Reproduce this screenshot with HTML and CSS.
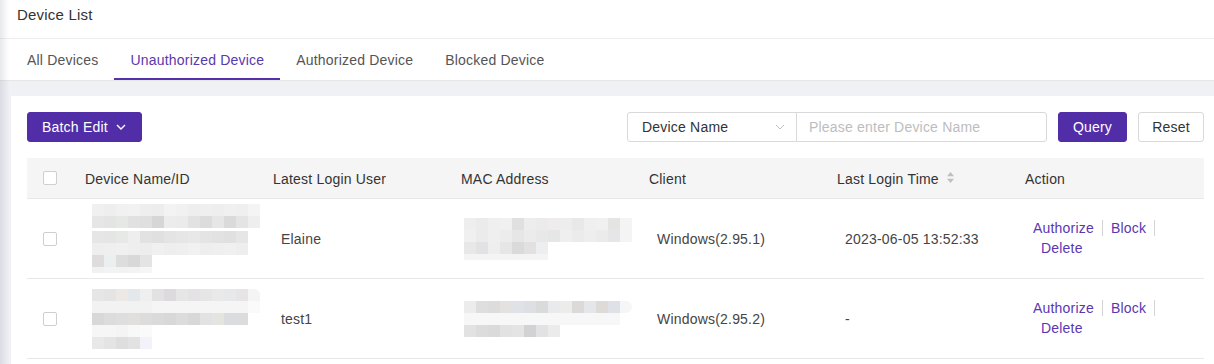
FILE: index.html
```html
<!DOCTYPE html>
<html lang="en">
<head>
<meta charset="utf-8">
<title>Device List</title>
<link rel="stylesheet" href="styles.css">
</head>
<body>
<div class="page">
  <div class="page-header">Device List</div>
  <div class="tabs">
    <div class="tab">All Devices</div>
    <div class="tab active">Unauthorized Device</div>
    <div class="tab">Authorized Device</div>
    <div class="tab">Blocked Device</div>
  </div>
  <div class="content">
    <div class="card">
      <div class="toolbar">
        <button class="btn btn-primary batch">Batch Edit
          <svg class="chev" width="10" height="6" viewBox="0 0 10 6"><path d="M1 1 L5 5 L9 1" fill="none" stroke="#fff" stroke-width="1.4"/></svg>
        </button>
        <div class="search">
          <div class="select">Device Name
            <svg class="chev" width="10" height="6" viewBox="0 0 10 6"><path d="M1 1 L5 5 L9 1" fill="none" stroke="#bfbfbf" stroke-width="1"/></svg>
          </div>
          <input class="input" type="text" placeholder="Please enter Device Name">
          <button class="btn btn-primary query">Query</button>
          <button class="btn btn-default reset">Reset</button>
        </div>
      </div>

      <div class="table">
        <div class="row head">
          <div class="cell check"><span class="checkbox"></span></div>
          <div class="cell">Device Name/ID</div>
          <div class="cell">Latest Login User</div>
          <div class="cell">MAC Address</div>
          <div class="cell">Client</div>
          <div class="cell">Last Login Time
            <svg class="sort" width="7" height="11" viewBox="0 0 7 11"><path d="M3.5 0 L7 4.2 L0 4.2 Z M0 6.8 L7 6.8 L3.5 11 Z" fill="#bfbfbf"/></svg>
          </div>
          <div class="cell">Action</div>
        </div>

        <div class="row">
          <div class="cell check"><span class="checkbox"></span></div>
          <div class="cell"><div class="mosaic dev">
            <div class="strip d1a"></div><div class="strip d1b"></div><div class="strip gap"></div>
            <div class="strip d1c"></div><div class="strip d1d"></div><div class="strip d1e"></div><div class="strip d1f"></div>
          </div></div>
          <div class="cell">Elaine</div>
          <div class="cell"><div class="mosaic mac">
            <div class="strip m1a"></div><div class="strip m1b"></div><div class="strip m1c"></div><div class="strip m1d"></div>
          </div></div>
          <div class="cell">Windows(2.95.1)</div>
          <div class="cell">2023-06-05 13:52:33</div>
          <div class="cell"><div class="actions"><a class="link">Authorize</a><a class="link">Block</a><a class="link">Delete</a></div></div>
        </div>

        <div class="row">
          <div class="cell check"><span class="checkbox"></span></div>
          <div class="cell"><div class="mosaic dev">
            <div class="strip d2a"></div><div class="strip d2b"></div><div class="strip d2c"></div><div class="strip d2d"></div><div class="strip d2e"></div>
          </div></div>
          <div class="cell">test1</div>
          <div class="cell"><div class="mosaic mac">
            <div class="strip m2a"></div><div class="strip m2b"></div><div class="strip m2c"></div>
          </div></div>
          <div class="cell">Windows(2.95.2)</div>
          <div class="cell">-</div>
          <div class="cell"><div class="actions"><a class="link">Authorize</a><a class="link">Block</a><a class="link">Delete</a></div></div>
        </div>
      </div>
    </div>
  </div>
</div>
<div class="edge-shadow"></div>
</body>
</html>
```

FILE: styles.css
```css
* { box-sizing: border-box; }

html, body {
  margin: 0;
  padding: 0;
  background: #ffffff;
  font-family: "Liberation Sans", Arial, sans-serif;
  font-size: 14px;
  letter-spacing: 0.2px;
  color: #333;
  overflow: hidden;
}

.page { min-height: 364px; background: #f0f1f5; }

.page-header {
  height: 39px;
  line-height: 30px;
  padding-left: 17px;
  font-size: 15px;
  color: #333;
  background: #fff;
  border-bottom: 1px solid #eeeeee;
}

.tabs {
  display: flex;
  padding-left: 11px;
  background: #fff;
  border-bottom: 1px solid #e6e6e6;
  height: 42px;
}

.tab {
  padding: 3px 16px 0;
  line-height: 36px;
  height: 41px;
  color: #555;
  border-bottom: 2px solid transparent;
  font-size: 14px;
  letter-spacing: 0.2px;
  white-space: nowrap;
}

.tab.active {
  color: #5a38ad;
  border-bottom-color: #5631a9;
}

.content {
  padding: 15px 0 0 11px;
}

.card {
  background: #fff;
  padding: 16px 10px 10px 16px;
  min-height: 270px;
}

.toolbar {
  display: flex;
  justify-content: space-between;
  align-items: center;
  height: 30px;
}

.btn {
  font-family: inherit;
  font-size: 14px;
  letter-spacing: 0.2px;
  height: 30px;
  border-radius: 3px;
  cursor: pointer;
  padding: 0;
  white-space: nowrap;
}

.btn-primary {
  background: #512da8;
  border: 1px solid #512da8;
  color: #fff;
}

.btn-default {
  background: #fff;
  border: 1px solid #d9d9d9;
  color: #333;
}

.batch {
  display: flex;
  align-items: center;
  gap: 8px;
  padding: 0 0 0 14px;
  width: 115px;
}

.batch .chev { flex: none; }

.search {
  display: flex;
  align-items: center;
}

.select {
  width: 170px;
  height: 30px;
  border: 1px solid #d9d9d9;
  border-radius: 3px 0 0 3px;
  display: flex;
  align-items: center;
  justify-content: space-between;
  padding: 0 11px 0 14px;
  color: #333;
  background: #fff;
  white-space: nowrap;
}

.input {
  width: 251px;
  height: 30px;
  margin-left: -1px;
  border: 1px solid #d9d9d9;
  border-radius: 0 3px 3px 0;
  padding: 0 12px;
  font-family: inherit;
  font-size: 14px;
  letter-spacing: 0.2px;
  color: #333;
  outline: none;
}

.input::placeholder { color: #bdbdbd; }

.query { width: 69px; margin-left: 11px; }
.reset { width: 66px; margin-left: 11px; }

.table { margin-top: 16px; }

.row {
  display: grid;
  grid-template-columns: 42px 188px 188px 188px 188px 188px 1fr;
  align-items: center;
  height: 80px;
  border-bottom: 1px solid #e8e8e8;
  color: #444;
}

.row.head {
  height: 41px;
  padding-top: 1px;
  background: #f5f5f5;
  color: #333;
}

.cell { padding-left: 24px; white-space: nowrap; }
.row.head .cell { padding-left: 16px; display: flex; align-items: center; gap: 8px; }
.row .cell.check { padding-left: 16px; display: flex; align-items: center; }
.row.head .cell.check { margin-top: -1px; }

.checkbox {
  display: block;
  width: 14px;
  height: 14px;
  border: 1px solid #cfcfcf;
  border-radius: 2px;
  background: #fff;
}

.sort { display: block; margin-top: -2px; }

.actions {
  display: flex;
  flex-wrap: wrap;
  width: 150px;
  margin-top: -1px;
  white-space: nowrap;
}

.link {
  color: #5a37b2;
  padding: 0 8px;
  line-height: 16px;
  margin: 2px 0;
  border-right: 1px solid #d4d4d4;
  cursor: pointer;
}
.link:first-child { padding-left: 0; }
.link:last-child { border-right: none; }

/* mosaic (pixelated, redacted values) */
.mosaic { display: flex; flex-direction: column; }
.mosaic.dev { margin-left: -1px; }
.mosaic.mac { margin-left: -5px; }
.strip { height: 12px; }
.strip.gap { height: 3px; }

.d1a { width: 168px; background: linear-gradient(90deg, #f0f0f0 0 12px, #eeeeee 12px 24px, #f1f1f1 24px 36px, #f2f2f2 36px 48px, #eeeeee 48px 60px, #ededed 60px 72px, #f3f3f3 72px 84px, #f1f1f1 84px 96px, #eeeeee 96px 108px, #efefef 108px 120px, #eeeeee 120px 132px, #f0f0f0 132px 144px, #efefef 144px 156px, #f4f4f4 156px 168px); }
.d1b { width: 168px; background: linear-gradient(90deg, #e6e6e6 0 12px, #e4e4e4 12px 24px, #e6e8e6 24px 36px, #e1e1e1 36px 48px, #dfdfdf 48px 60px, #d6d6d6 60px 72px, #ececec 72px 84px, #ebebeb 84px 96px, #e2e2e2 96px 108px, #dcdcdc 108px 120px, #e6e6e6 120px 132px, #dadada 132px 144px, #e4e4e4 144px 156px, #eeeeee 156px 168px); }
.d1c { width: 156px; background: linear-gradient(90deg, #e6e6e6 0 12px, #e4e6e4 12px 24px, #e8e8e8 24px 36px, #eeeeee 36px 48px, #e2e2e2 48px 60px, #e0e0e0 60px 72px, #e4e4e4 72px 84px, #e6e6e6 84px 96px, #e8e8e8 96px 108px, #e4e4e4 108px 120px, #e2e2e2 120px 132px, #e0e0e0 132px 144px, #e6e6e6 144px 156px); }
.d1d { width: 156px; background: linear-gradient(90deg, #eeeeee 0 12px, #efefef 12px 24px, #f0f0f0 24px 36px, #eeeeee 36px 48px, #ededed 48px 60px, #f0f0f0 60px 72px, #eeeeee 72px 84px, #efefef 84px 96px, #f1f1f1 96px 108px, #eeeeee 108px 120px, #efefef 120px 132px, #f0f0f0 132px 144px, #eeeeee 144px 156px); }
.d1e { width: 60px; background: linear-gradient(90deg, #dedcdc 0 12px, #ecefef 12px 24px, #dddddd 24px 36px, #d8d8d8 36px 48px, #e4e4e4 48px 60px); }
.d1f { width: 60px; height: 6px; background: linear-gradient(90deg, #f0f2f2 0 12px, #f2f4f4 12px 24px, #f2f2f2 24px 36px, #f3f3f3 36px 48px, #f6f6f6 48px 60px); }

.d2a { width: 168px; border-radius: 0 6px 0 0; background: linear-gradient(90deg, #e6e6e6 0 12px, #e4e4e4 12px 24px, #ebe8e5 24px 36px, #e5e8eb 36px 48px, #efefef 48px 60px, #e2e2e2 60px 72px, #dcdadc 72px 84px, #e6e6e6 84px 96px, #e4e2e4 96px 108px, #e6e6e6 108px 120px, #e9e9e9 120px 132px, #e6e8ea 132px 144px, #e6e4e4 144px 156px, #f4f4f4 156px 168px); }
.d2b { width: 168px; background: linear-gradient(90deg, #f2f2f2 0 60px, #f5f5f5 60px 156px, #fafafa 156px 168px); }
.d2c { width: 156px; background: linear-gradient(90deg, #d8d8d8 0 12px, #dcdcdc 12px 24px, #dedede 24px 36px, #e0dfdc 36px 48px, #dcdcdc 48px 60px, #dadada 60px 72px, #d8d8d8 72px 84px, #dcdcdc 84px 96px, #d8d8d8 96px 108px, #e0e2e4 108px 120px, #e6e4e0 120px 132px, #dadde0 132px 144px, #dcdcdc 144px 156px); }
.d2d { width: 60px; background: linear-gradient(90deg, #f6f6f6 0 24px, #f4f4f4 24px 36px, #f8f8f8 36px 48px, #fafafa 48px 60px); }
.d2e { width: 60px; background: linear-gradient(90deg, #e8e8e8 0 12px, #e4e4e4 12px 24px, #dedede 24px 36px, #e2e2e2 36px 48px, #f2f2f8 48px 60px); }

.m1a { width: 168px; background: linear-gradient(90deg, #eeeeee 0 12px, #ebebeb 12px 24px, #efefef 24px 36px, #f0f0f0 36px 48px, #e0e0e0 48px 60px, #ededed 60px 72px, #ebebed 72px 84px, #eeedeb 84px 96px, #ededed 96px 108px, #e8e8e8 108px 120px, #efefef 120px 132px, #f0f0f0 132px 144px, #e4e4e2 144px 156px, #f4f4f4 156px 168px); }
.m1b { width: 168px; background: linear-gradient(90deg, #f0f0f0 0 12px, #ebebeb 12px 24px, #efefef 24px 36px, #ececec 36px 48px, #e6e6e6 48px 60px, #ebebeb 60px 72px, #e8e8e8 72px 84px, #e6e6e6 84px 96px, #efefef 96px 108px, #ebebeb 108px 120px, #eeeeee 120px 132px, #ebebeb 132px 144px, #e6e6e6 144px 156px, #f4f4f4 156px 168px); }
.m1c { width: 84px; background: linear-gradient(90deg, #e8e8e8 0 12px, #e2e2e4 12px 24px, #eeeeee 24px 36px, #e6e6e6 36px 48px, #dadada 48px 60px, #e2e0e0 60px 72px, #eceef0 72px 84px); }
.m1d { width: 84px; height: 6px; background: #f4f4f4; }

.m2a { width: 168px; border-radius: 0 6px 6px 0; background: linear-gradient(90deg, #ececec 0 12px, #dedede 12px 24px, #dcdcdc 24px 36px, #e4e2e0 36px 48px, #dfe2e6 48px 60px, #dedfe2 60px 72px, #dadada 72px 84px, #e8eaec 84px 96px, #ececea 96px 108px, #dcdad8 108px 120px, #e4e6ea 120px 132px, #dedad8 132px 144px, #dee2e6 144px 156px, #f4f6f8 156px 168px); }
.m2b { width: 156px; background: #f7f7f7; }
.m2c { width: 96px; background: linear-gradient(90deg, #e2e2e2 0 12px, #dcdcdc 12px 24px, #dadada 24px 36px, #e2e2e2 36px 48px, #e4e4e4 48px 60px, #d2d2d4 60px 72px, #e2e2e2 72px 84px, #eaebea 84px 96px); }

.edge-shadow {
  position: fixed;
  left: 0;
  top: 0;
  bottom: 0;
  width: 9px;
  background: linear-gradient(90deg, rgba(40, 50, 90, 0.11), rgba(40, 50, 90, 0));
  pointer-events: none;
}
```
